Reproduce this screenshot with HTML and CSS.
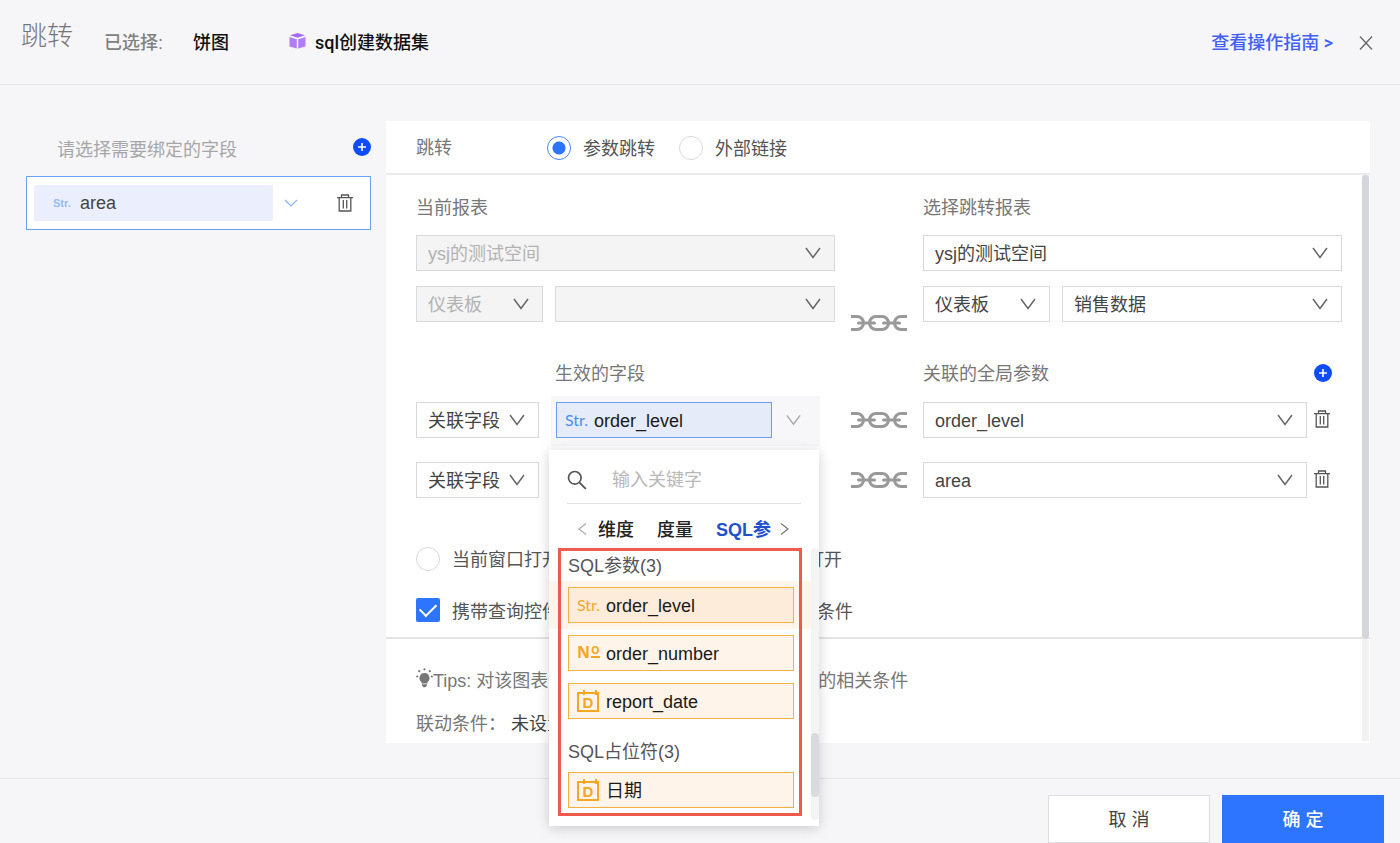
FILE: index.html
```html
<!DOCTYPE html>
<html lang="zh-CN">
<head>
<meta charset="utf-8">
<title>跳转</title>
<link rel="stylesheet" href="styles.css">
</head>
<body>
<svg class="sprite" aria-hidden="true">
  <symbol id="chevron" viewBox="0 0 16 12"><path d="M1 1l7 9.500 7-9.500" fill="none" stroke="currentColor" stroke-width="1.500"/></symbol>
  <symbol id="trash" viewBox="0 0 16 18"><path d="M0 3.700h16M4.500 3.500V1h7v2.500M2.200 4v13h11.600V4M6.300 6v8.500M9.700 6v8.500" fill="none" stroke="currentColor" stroke-width="1.300"/></symbol>
  <symbol id="plus" viewBox="0 0 18 18"><circle cx="9" cy="9" r="9" fill="#0f4bff"/><path d="M9 5v8M5 9h8" stroke="#fff" stroke-width="1.600"/></symbol>
  <symbol id="chain" viewBox="0 0 56 18">
    <g fill="none" stroke="currentColor" stroke-width="3"><path d="M0 2.500h6a6.500 6.500 0 0 1 0 13H0"/><rect x="18.500" y="2.500" width="19" height="13" rx="6.500"/><path d="M56 2.500h-6a6.500 6.500 0 0 0 0 13h6"/></g>
    <path d="M7.500 9h16M32.500 9h16" fill="none" stroke="currentColor" stroke-width="3" stroke-linecap="round"/>
  </symbol>
</svg>

<header class="topbar">
  <h1 class="topbar-title">跳转</h1>
  <span class="topbar-label">已选择:</span>
  <strong class="topbar-chart">饼图</strong>
  <svg class="cube" viewBox="0 0 16 16" aria-hidden="true"><path d="M8 0l7.500 2.300L8 4.800 0.500 2.300z" fill="#a66cf0"/><path d="M0 4l7.300 2.300V15.500L0 13.500zM16 4L8.700 6.300V15.500L16 13.500z" fill="#b27cf5"/></svg>
  <strong class="topbar-dataset">sql创建数据集</strong>
  <a class="guide" href="#guide">查看操作指南 &gt;</a>
  <button class="icon-button" type="button" aria-label="关闭"><svg class="close" viewBox="0 0 14 14"><path d="M1 0.500l12 13M13 0.500l-12 13" stroke="currentColor" stroke-width="1.300"/></svg></button>
</header>

<main class="workspace">
  <aside class="sidebar">
    <div class="sidebar-head">
      <h2 class="sidebar-title">请选择需要绑定的字段</h2>
      <button class="icon-button" type="button" aria-label="添加字段"><svg class="plus"><use href="#plus"/></svg></button>
    </div>
    <div class="bound">
      <button class="bound-field" type="button"><span class="bound-type">Str.</span>area</button>
      <button class="icon-button bound-toggle" type="button" aria-label="展开"><svg class="chevron-small" viewBox="0 0 14 8"><path d="M1 1l6 6 6-6" fill="none" stroke="currentColor" stroke-width="1.200"/></svg></button>
      <button class="icon-button" type="button" aria-label="删除 area"><svg class="trash"><use href="#trash"/></svg></button>
    </div>
  </aside>

  <section class="panel">
    <div class="panel-head">
      <span class="panel-title">跳转</span>
      <label class="option"><input class="radio" type="radio" name="kind" checked><span class="option-text">参数跳转</span></label>
      <label class="option"><input class="radio" type="radio" name="kind"><span class="option-text">外部链接</span></label>
    </div>
    <div class="panel-main">
      <div class="panel-content">
        <div class="mapping">
          <div class="report">
            <h3 class="caption">当前报表</h3>
            <span class="select"><select aria-label="当前空间" disabled><option>ysj的测试空间</option></select><svg class="chevron"><use href="#chevron"/></svg></span>
            <div class="report-row">
              <span class="select select-type"><select aria-label="当前类型" disabled><option>仪表板</option></select><svg class="chevron"><use href="#chevron"/></svg></span>
              <span class="select"><select aria-label="当前报表" disabled><option></option></select><svg class="chevron"><use href="#chevron"/></svg></span>
            </div>
          </div>
          <svg class="chain chain-report"><use href="#chain"/></svg>
          <div class="report">
            <h3 class="caption">选择跳转报表</h3>
            <span class="select"><select aria-label="目标空间"><option>ysj的测试空间</option></select><svg class="chevron"><use href="#chevron"/></svg></span>
            <div class="report-row">
              <span class="select select-type"><select aria-label="目标类型"><option>仪表板</option></select><svg class="chevron"><use href="#chevron"/></svg></span>
              <span class="select"><select aria-label="目标报表"><option>销售数据</option></select><svg class="chevron"><use href="#chevron"/></svg></span>
            </div>
          </div>
        </div>

        <div class="mapping mapping-head">
          <h3 class="caption caption-field">生效的字段</h3>
          <span></span>
          <div class="param-head">
            <h3 class="caption">关联的全局参数</h3>
            <button class="icon-button" type="button" aria-label="添加参数"><svg class="plus"><use href="#plus"/></svg></button>
          </div>
        </div>

        <div class="mapping mapping-row">
          <div class="source">
            <span class="select select-relation"><select aria-label="关联方式 1"><option>关联字段</option></select><svg class="chevron"><use href="#chevron"/></svg></span>
            <div class="picker">
              <button class="picker-value" type="button"><span class="type-text">Str.</span>order_level</button>
              <svg class="chevron picker-chevron"><use href="#chevron"/></svg>

              <div class="dropdown">
                <label class="search">
                  <svg class="search-icon" viewBox="0 0 20 20" aria-hidden="true"><circle cx="7.800" cy="7.800" r="6.300" fill="none" stroke="currentColor" stroke-width="1.700"/><path d="M12.300 12.300l6.500 6.500" stroke="currentColor" stroke-width="1.900"/></svg>
                  <input class="search-input" type="text" placeholder="输入关键字" aria-label="输入关键字">
                </label>
                <div class="tabs">
                  <button class="icon-button tab-prev" type="button" aria-label="上一个"><svg class="arrow" viewBox="0 0 9 12"><path d="M8 0.500L1 6l7 5.500" fill="none" stroke="currentColor" stroke-width="1.200"/></svg></button>
                  <button class="tab" type="button">维度</button>
                  <button class="tab" type="button">度量</button>
                  <button class="tab tab-active" type="button">SQL参</button>
                  <button class="icon-button tab-next" type="button" aria-label="下一个"><svg class="arrow" viewBox="0 0 9 12"><path d="M1 0.500L8 6l-7 5.500" fill="none" stroke="currentColor" stroke-width="1.200"/></svg></button>
                </div>
                <div class="list">
                  <div class="list-items">
                    <h4 class="group">SQL参数(3)</h4>
                    <div class="item item-selected"><button class="token" type="button"><span class="type-text">Str.</span>order_level</button></div>
                    <div class="item"><button class="token" type="button"><span class="type-number">N<span class="ordinal">o</span></span>order_number</button></div>
                    <div class="item"><button class="token" type="button"><span class="type-date">D</span>report_date</button></div>
                    <h4 class="group group-next">SQL占位符(3)</h4>
                    <div class="item"><button class="token" type="button"><span class="type-date">D</span>日期</button></div>
                  </div>
                  <div class="list-track"><div class="list-thumb"></div></div>
                </div>
                <div class="highlight"></div>
              </div>
            </div>
          </div>
          <svg class="chain"><use href="#chain"/></svg>
          <div class="target">
            <span class="select"><select aria-label="全局参数 1"><option>order_level</option></select><svg class="chevron"><use href="#chevron"/></svg></span>
            <button class="icon-button" type="button" aria-label="删除 order_level"><svg class="trash"><use href="#trash"/></svg></button>
          </div>
        </div>

        <div class="mapping mapping-row">
          <div class="source">
            <span class="select select-relation"><select aria-label="关联方式 2"><option>关联字段</option></select><svg class="chevron"><use href="#chevron"/></svg></span>
          </div>
          <svg class="chain"><use href="#chain"/></svg>
          <div class="target">
            <span class="select"><select aria-label="全局参数 2"><option>area</option></select><svg class="chevron"><use href="#chevron"/></svg></span>
            <button class="icon-button" type="button" aria-label="删除 area 参数"><svg class="trash"><use href="#trash"/></svg></button>
          </div>
        </div>

        <div class="open-mode">
          <label class="option"><input class="radio" type="radio" name="open"><span class="option-text">当前窗口打开</span></label>
          <label class="option"><input class="radio" type="radio" name="open"><span class="option-text">新窗口打开</span></label>
          <label class="option"><input class="radio" type="radio" name="open"><span class="option-text">弹窗打开</span></label>
        </div>
        <label class="option carry"><input class="checkbox" type="checkbox" checked><span class="option-text">携带查询控件条件跳转到目标报表 作为默认的条件</span></label>
      </div>

      <div class="notes">
        <p class="tips"><svg class="bulb" viewBox="0 0 17 20" aria-hidden="true"><path d="M8.500 5a5 5 0 0 1 3 9v1.500h-6V14a5 5 0 0 1 3-9zM6 16.300h5v1.200l-1.500 1.800h-2L6 17.500z" fill="currentColor"/><g fill="currentColor"><circle cx="8.500" cy="1.300" r="1.100"/><circle cx="3.200" cy="3.200" r="1.100"/><circle cx="13.800" cy="3.200" r="1.100"/><circle cx="1.200" cy="8.500" r="1.100"/><circle cx="15.800" cy="8.500" r="1.100"/></g></svg>Tips: 对该图表设置跳转后，将同时携带图表联动的相关条件</p>
        <p class="condition">联动条件：<span class="condition-value">未设置</span></p>
      </div>
      <div class="panel-track"><div class="panel-thumb"></div></div>
    </div>
  </section>
</main>

<footer class="actions">
  <button class="action" type="button">取 消</button>
  <button class="action action-primary" type="button">确 定</button>
</footer>
</body>
</html>
```
FILE: styles.css
```css
* { box-sizing: border-box; }

body {
  margin: 0;
  min-height: 100vh;
  display: flex;
  flex-direction: column;
  background: #f6f6f9;
  color: #555;
  font: 18px/24px "Liberation Sans", "Noto Sans CJK SC", sans-serif;
}

h1, h2, h3, h4, p { margin: 0; font-weight: 400; font-size: 18px; }
svg { display: block; flex: none; }
button, input, select { font: inherit; color: inherit; }
button { cursor: pointer; }
.sprite { position: absolute; width: 0; height: 0; }

.icon-button { display: block; flex: none; padding: 0; border: 0; background: none; }
.plus { width: 18px; height: 18px; }
.trash { width: 16px; height: 18px; color: #555; }
.chevron { width: 16px; height: 12px; color: #666; }

/* Top bar */
.topbar {
  display: flex;
  align-items: center;
  height: 85px;
  padding: 2px 27px 0 21px;
  border-bottom: 1px solid #e4e4e8;
}
.topbar-title { margin: 0 31px 14px 0; font-size: 26px; line-height: 36px; font-weight: 300; color: #777; }
.topbar-label { margin-right: 30px; font-weight: 500; color: #808080; }
.topbar-chart { margin-right: 60px; font-weight: 500; color: #111; }
.cube { width: 17px; height: 16px; margin: 0 9px 5px 0; }
.topbar-dataset { font-family: Roboto, "Noto Sans CJK SC", sans-serif; font-weight: 500; color: #111; }
.guide { margin-left: auto; font-family: Roboto, "Noto Sans CJK SC", sans-serif; font-weight: 500; color: #4260f5; text-decoration: none; }
.topbar .icon-button { margin-left: 26px; }
.close { width: 14px; height: 14px; color: #666; }

/* Workspace */
.workspace { flex: 1; display: flex; gap: 15px; padding: 36px 30px 35px 26px; }
.sidebar { flex: none; width: 345px; }
.sidebar-head { display: flex; align-items: flex-start; justify-content: space-between; height: 55px; padding: 17px 0 0 31px; }
.sidebar-title { color: #a6a6a6; }
.bound {
  display: flex;
  align-items: center;
  height: 54px;
  padding: 0 17px 0 7px;
  border: 1px solid #6ba1f5;
  background: #fff;
}
.bound-field {
  display: flex;
  align-items: center;
  flex: 1;
  height: 36px;
  padding: 0 19px;
  border: 0;
  border-radius: 2px;
  background: #ebeffd;
  color: #444;
}
.bound-type { width: 27px; text-align: left; font-size: 11px; font-weight: 700; color: #96bbf9; }
.bound-toggle { margin: 0 39px 0 11px; }
.chevron-small { width: 14px; height: 8px; color: #8bb4f7; }

/* Panel */
.panel { flex: 1; display: flex; flex-direction: column; background: #fff; }
.panel-head { display: flex; align-items: center; gap: 24px; height: 54px; padding: 2px 30px 0; border-bottom: 2px solid #ebebed; }
.panel-title { width: 107px; color: #777; }
.option { display: flex; align-items: center; gap: 12px; height: 24px; white-space: nowrap; }
.option-text { padding-top: 2px; }
.radio {
  appearance: none;
  flex: none;
  width: 24px;
  height: 24px;
  margin: 0;
  border: 1px solid #d9d9d9;
  border-radius: 50%;
  background: #fff;
}
.radio:checked { border-color: #4a86fb; background: radial-gradient(circle, #2d74ff 6px, #fff 7px); }
.checkbox {
  appearance: none;
  flex: none;
  display: grid;
  place-items: center;
  width: 24px;
  height: 24px;
  margin: 0;
  border-radius: 2px;
  background: #2d74ff;
}
.checkbox::after {
  content: "";
  width: 14px;
  height: 8px;
  margin-bottom: 4px;
  border: solid #fff;
  border-width: 0 0 2px 2px;
  transform: rotate(-45deg);
}

.panel-main { position: relative; flex: 1; }
.panel-track { position: absolute; top: 0; right: 1px; bottom: 2px; width: 7px; background: #f2f2f3; }
.panel-thumb { height: 82%; border-radius: 4px; background: #d5d6dd; }
.panel-content { padding: 21px 28px 15px 30px; border-bottom: 2px solid #e4e4e6; }

.mapping { display: grid; grid-template-columns: 1fr 88px 1fr; }
.mapping-head { padding: 40px 0 16px; }
.mapping-row { align-items: center; margin-bottom: 24px; }
.caption { color: #777; }
.caption-field { padding-left: 139px; }
.report { display: flex; flex-direction: column; }
.report .caption { margin-bottom: 15px; }
.report-row { display: flex; gap: 12px; margin-top: 15px; }
.param-head { display: flex; align-items: center; justify-content: space-between; padding-right: 10px; }
.param-head .icon-button { margin-bottom: 3px; }
.chain { justify-self: center; width: 56px; height: 18px; color: #999; }
.chain-report { align-self: end; margin-bottom: -10px; }

.select { position: relative; display: block; flex: 1; }
.select select {
  appearance: none;
  display: block;
  width: 100%;
  height: 36px;
  padding: 2px 36px 0 11px;
  border: 1px solid #d9d9d9;
  border-radius: 0;
  background: #fff;
  color: #444;
}
.select select:disabled { background: #f4f4f4; color: #b2b2b2; opacity: 1; }
.select .chevron { position: absolute; top: 12px; right: 14px; pointer-events: none; }
.select-type { flex: none; width: 127px; }
.select-relation { flex: none; width: 123px; }

.source { display: flex; gap: 12px; height: 36px; }
.target { display: flex; align-items: center; gap: 7px; padding-right: 12px; }
.target .icon-button { margin-bottom: 3px; }

.picker {
  position: relative;
  display: flex;
  align-items: center;
  flex: none;
  width: 269px;
  height: 50px;
  margin-top: -6px;
  padding: 0 19px 2px 5px;
  background: #f7f7f9;
}
.picker-value {
  display: flex;
  align-items: center;
  flex: 1;
  height: 36px;
  padding: 2px 8px 0;
  border: 1px solid #6b9ff5;
  background: #e6ebfa;
  color: #1a1a1a;
}
.picker-chevron { width: 15px; margin-left: 14px; color: #aaa; }
.type-text { width: 29px; padding-bottom: 2px; text-align: left; font-family: Lato, sans-serif; font-size: 16px; color: #4c8df6; }

/* Field dropdown */
.dropdown {
  position: absolute;
  z-index: 2;
  top: 54px;
  left: -2px;
  width: 270px;
  height: 376px;
  background: #fff;
  box-shadow: 0 2px 12px rgba(0, 0, 0, 0.18);
}
.search { display: flex; align-items: center; gap: 25px; height: 54px; margin: 0 18px; padding-top: 7px; border-bottom: 1px solid #e2e2e2; }
.search-icon { width: 20px; height: 20px; }
.search-input { flex: 1; min-width: 0; padding: 0; border: 0; background: none; outline: 0; }
.search-input::placeholder { color: #b8b8b8; }
.tabs { display: flex; align-items: center; height: 44px; padding: 5px 30px 0 29px; }
.tab { margin-right: 23px; padding: 2px 0 0; border: 0; background: none; font-weight: 500; color: #222; }
.tab-active { margin-right: 9px; font-weight: 700; color: #1f51cf; }
.arrow { width: 9px; height: 12px; color: #777; }
.tab-prev { margin-right: 11px; }
.tab-prev .arrow { color: #aaa; }
.list { display: flex; height: 272px; }
.list-items { flex: 1; }
.list-track { width: 8px; border-radius: 4px; background: #f4f4f5; }
.list-thumb { height: 64px; margin-top: 185px; border-radius: 4px; background: #d9dae0; }
.group { height: 33px; padding: 6px 19px 0; }
.group-next { height: 41px; padding-top: 15px; }
.item { padding: 6px 17px 6px 19px; }
.item-selected { background: #fff5ea; }
.token {
  display: flex;
  align-items: center;
  width: 100%;
  height: 36px;
  padding: 2px 8px 0;
  border: 1px solid #f5b041;
  background: #fff4e9;
  color: #1a1a1a;
}
.item-selected .token { background: #feecdb; }
.token .type-text { color: #f6a623; }
.type-number { display: flex; gap: 1px; width: 29px; padding-bottom: 4px; font-family: "Noto Sans", sans-serif; font-size: 16px; line-height: 20px; font-weight: 700; color: #f6a623; }
.ordinal { height: 16px; border-bottom: 2px solid; font-size: 14px; line-height: 14px; font-weight: 600; }
.type-date {
  position: relative;
  width: 22px;
  height: 20px;
  margin-right: 7px;
  border: 2px solid #f6a623;
  font-size: 15px;
  line-height: 17px;
  font-weight: 700;
  color: #f6a623;
}
.type-date::before {
  content: "";
  position: absolute;
  top: -4px;
  left: 4px;
  width: 10px;
  height: 5px;
  border: solid #f6a623;
  border-width: 0 2px;
}
.highlight { position: absolute; top: 98px; left: 9px; width: 244px; height: 268px; border: 3px solid #ee5b4c; pointer-events: none; }

/* Options and notes */
.open-mode { display: flex; gap: 24px; padding-top: 25px; }
.carry { margin-top: 27px; }
.carry .option-text { padding-top: 4px; }
.notes { padding: 29px 30px 0; color: #777; }
.tips { display: flex; align-items: center; white-space: nowrap; }
.bulb { width: 17px; height: 20px; margin-bottom: 6px; }
.condition { margin-top: 18px; }
.condition-value { margin-left: 5px; color: #444; }

/* Footer */
.actions { display: flex; justify-content: flex-end; gap: 12px; padding: 16px 16px 0; border-top: 1px solid #e8e8eb; }
.action { width: 162px; height: 48px; padding-top: 3px; border: 1px solid #dedee2; background: #fff; color: #444; }
.action-primary { border-color: #2d74ff; background: #2d74ff; color: #fff; font-weight: 500; }
```
